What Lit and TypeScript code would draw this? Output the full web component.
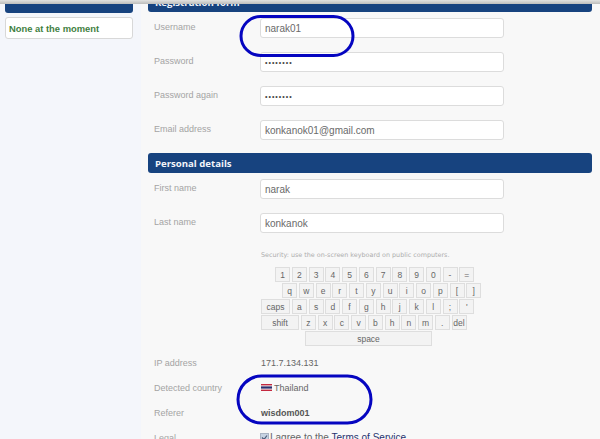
import { LitElement, html, css } from 'lit';
import { customElement } from 'lit/decorators.js';

const KEY_ROWS = [
  { cls: 'r1', keys: ['1', '2', '3', '4', '5', '6', '7', '8', '9', '0', '-', '='] },
  { cls: 'r2', keys: ['q', 'w', 'e', 'r', 't', 'y', 'u', 'i', 'o', 'p', '[', ']'] },
  { cls: 'r3', keys: ['caps', 'a', 's', 'd', 'f', 'g', 'h', 'j', 'k', 'l', ';', "'"] },
  { cls: 'r4', keys: ['shift', 'z', 'x', 'c', 'v', 'b', 'h', 'n', 'm', '.', 'del'] },
];

@customElement('app-root')
export class AppRoot extends LitElement {
  static styles = css`
    :host {
      display: block;
      position: relative;
      width: 600px;
      height: 439px;
      overflow: hidden;
      font-family: 'Liberation Sans', Arial, sans-serif;
      font-size: 10px;
      color: #666;
      background: #f8f8f8;
    }
    .strip {
      height: 4px;
      background: linear-gradient(#e2e2e0, #bdbdbb);
    }
    .page {
      display: flex;
      height: 435px;
      overflow: hidden;
    }
    .side {
      width: 141px;
      flex: none;
      box-sizing: border-box;
      padding: 0 8px 0 5px;
      background: #f4f6fb;
    }
    .side-bar {
      height: 9px;
      background: #17437f;
      border-radius: 0 0 3px 3px;
    }
    .side-box {
      margin-top: 4px;
      height: 22px;
      box-sizing: border-box;
      display: flex;
      align-items: center;
      padding-left: 3px;
      background: #fff;
      border: 1px solid #d8d8d8;
      border-radius: 3px;
      color: #3f7f3f;
      font-weight: bold;
      font-size: 9.4px;
    }
    .main {
      flex: 1;
      padding: 0 8px 0 7px;
      margin-top: -12px;
    }
    .bar {
      height: 20px;
      box-sizing: border-box;
      display: flex;
      align-items: center;
      padding-left: 7px;
      background: #17437f;
      border-radius: 3px;
      color: #f2f5fa;
      font-family: 'Open Sans', sans-serif;
      font-weight: 700;
      font-size: 9.6px;
    }
    .fields {
      display: flex;
      flex-direction: column;
      gap: 14px;
      padding: 6px 0 13px;
    }
    .row {
      display: flex;
      align-items: center;
      height: 20px;
    }
    .label {
      width: 112px;
      padding-left: 6px;
      flex: none;
      box-sizing: border-box;
      font-size: 9px;
      color: #a4a4a4;
      position: relative;
      top: -1px;
    }
    .input {
      width: 244px;
      height: 20px;
      box-sizing: border-box;
      display: flex;
      align-items: center;
      padding-left: 4px;
      background: #fff;
      border: 1px solid #dcdcdc;
      border-radius: 3px;
      font-size: 10px;
      color: #6a6a6a;
    }
    .dots {
      font-size: 7px;
      letter-spacing: 1px;
      color: #444;
    }
    .security {
      margin: 17px 0 0 113px;
      height: 11px;
      line-height: 11px;
      font-family: 'DejaVu Sans', sans-serif;
      font-size: 6.4px;
      color: #adadad;
    }
    .keyboard {
      margin: 6px 0 0 113px;
      display: flex;
      flex-direction: column;
      gap: 1px;
    }
    .keys {
      display: flex;
      gap: 1.75px;
    }
    .r1 { margin-left: 14px; }
    .r2 { margin-left: 21px; }
    .key {
      width: 15px;
      height: 15px;
      box-sizing: border-box;
      display: flex;
      align-items: center;
      justify-content: center;
      background: #f3f3f3;
      border: 1px solid #dedede;
      font-size: 8.5px;
      color: #666;
    }
    .caps { width: 29px; }
    .shift { width: 38px; }
    .space {
      width: 127px;
      margin-left: 44px;
    }
    .info {
      display: flex;
      flex-direction: column;
      gap: 10px;
      padding-top: 9px;
    }
    .line {
      display: flex;
      align-items: center;
      height: 15px;
    }
    .line .label {
      top: 0;
    }
    .value {
      font-size: 9px;
      color: #666;
      display: flex;
      align-items: center;
      gap: 2px;
      padding-left: 1px;
    }
    .value b {
      color: #555;
    }
    .legal {
      font-size: 10px;
      padding-left: 0;
      gap: 1px;
      white-space: pre;
    }
    .flag {
      width: 11px;
      height: 7px;
      display: block;
    }
    .check {
      width: 9px;
      height: 9px;
      display: block;
    }
    a {
      color: #27336f;
      text-decoration: none;
    }
    .oval {
      position: absolute;
      left: 0;
      top: 0;
      pointer-events: none;
    }
  `;

  field(label: string, value: string, password = false) {
    return html`<div class="row">
      <div class="label">${label}</div>
      <div class="input"><span class=${password ? 'dots' : ''}>${value}</span></div>
    </div>`;
  }

  render() {
    return html`
      <div class="strip"></div>
      <div class="page">
        <div class="side">
          <div class="side-bar"></div>
          <div class="side-box">None at the moment</div>
        </div>
        <div class="main">
          <div class="bar">Registration form</div>
          <div class="fields">
            ${this.field('Username', 'narak01')}
            ${this.field('Password', '••••••••', true)}
            ${this.field('Password again', '••••••••', true)}
            ${this.field('Email address', 'konkanok01@gmail.com')}
          </div>
          <div class="bar">Personal details</div>
          <div class="fields" style="padding-bottom:0">
            ${this.field('First name', 'narak')}
            ${this.field('Last name', 'konkanok')}
          </div>
          <div class="security">Security: use the on-screen keyboard on public computers.</div>
          <div class="keyboard">
            ${KEY_ROWS.map(
              (row) => html`<div class="keys ${row.cls}">
                ${row.keys.map((k) => html`<div class="key ${k.length > 1 ? k : ''}">${k}</div>`)}
              </div>`,
            )}
            <div class="key space">space</div>
          </div>
          <div class="info">
            <div class="line">
              <div class="label">IP address</div>
              <div class="value">171.7.134.131</div>
            </div>
            <div class="line">
              <div class="label">Detected country</div>
              <div class="value">
                <svg class="flag" viewBox="0 0 11 7">
                  <rect width="11" height="7" fill="#c4283f"></rect>
                  <rect y="1.4" width="11" height="4.2" fill="#f2f2f2"></rect>
                  <rect y="2.4" width="11" height="2.2" fill="#2a2f6e"></rect>
                </svg>
                Thailand
              </div>
            </div>
            <div class="line">
              <div class="label">Referer</div>
              <div class="value"><b>wisdom001</b></div>
            </div>
            <div class="line">
              <div class="label">Legal</div>
              <div class="value legal">
                <svg class="check" viewBox="0 0 9 9">
                  <rect x="0.5" y="0.5" width="8" height="8" fill="#c6d2e2" stroke="#a9b4c4"></rect>
                  <path d="M2 4.5 L4 6.5 L7 2.5" fill="none" stroke="#4a5a78" stroke-width="1.2"></path>
                </svg>
                <span>I agree to the <a>Terms of Service</a></span>
              </div>
            </div>
          </div>
        </div>
      </div>
      <svg class="oval" width="600" height="439" fill="none" stroke="#0505c0" stroke-width="3">
        <rect x="241" y="16.5" width="112" height="39" rx="19.5"></rect>
        <rect x="238" y="376" width="133" height="47" rx="23.5"></rect>
      </svg>
    `;
  }
}
